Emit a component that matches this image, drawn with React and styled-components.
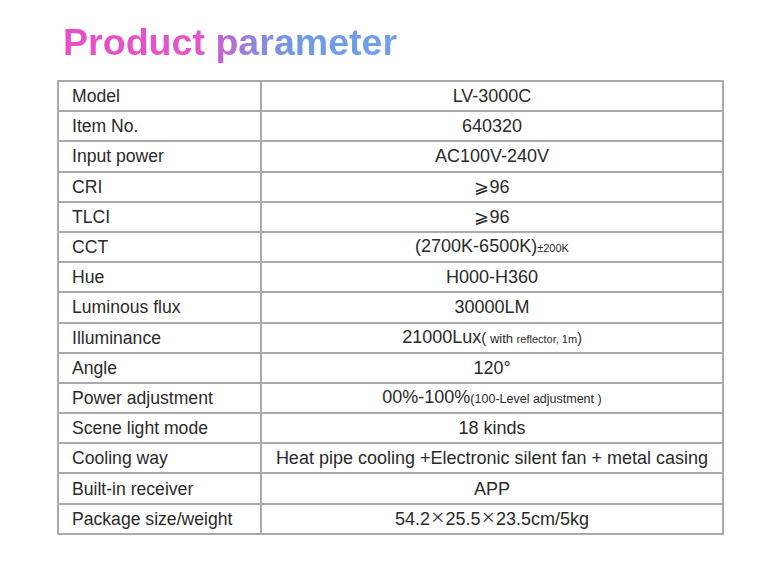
import React from "react";
import styled, { createGlobalStyle } from "styled-components";

const GlobalStyle = createGlobalStyle`
  html, body {
    margin: 0;
    padding: 0;
    background: #ffffff;
  }
  body {
    font-family: "Liberation Sans", Arial, sans-serif;
    color: #222;
  }
`;

const Page = styled.div`
  width: 762px;
  height: 585px;
  padding: 21px 0 0 0;
  box-sizing: border-box;
  background: #fff;
`;

const Title = styled.h1`
  margin: 0 0 17px 63px;
  font-family: "Liberation Sans", Arial, sans-serif;
  font-weight: 700;
  font-size: 37.6px;
  line-height: 42px;
  display: inline-block;
  background: linear-gradient(
    90deg,
    #e84ec6 0%,
    #e653c9 40%,
    #c066d3 48%,
    #8a88dd 58%,
    #6f9ae6 70%,
    #72a0e8 100%
  );
  -webkit-background-clip: text;
  background-clip: text;
  color: transparent;
`;

const Table = styled.table`
  margin-left: 57px;
  width: 667px;
  border-collapse: collapse;
  border: 2px solid #aaa;
  table-layout: fixed;
`;

const Row = styled.tr`
  height: 30.2px;
`;

const Cell = styled.td`
  border: 2px solid #aaa;
  padding: 0;
  color: #2a2a2a;
  vertical-align: middle;
  white-space: nowrap;
  line-height: 20px;
`;

const Label = styled(Cell)`
  width: 188px;
  padding-left: 13px;
  font-size: 17.6px;
  text-align: left;
`;

const Value = styled(Cell)`
  font-size: 18px;
  text-align: center;
`;

const Small = styled.span`
  font-size: ${(p) => p.$size}px;
`;

const Times = styled.span`
  font-family: "Liberation Serif", serif;
  font-size: 24px;
  line-height: 10px;
  padding: 0 1px;
`;

const rows = [
  { label: "Model", value: "LV-3000C" },
  { label: "Item No.", value: "640320" },
  { label: "Input power", value: "AC100V-240V" },
  { label: "CRI", value: "⩾96" },
  { label: "TLCI", value: "⩾96" },
  {
    label: "CCT",
    value: (
      <>
        (2700K-6500K)<Small $size={11}>±200K</Small>
      </>
    ),
  },
  { label: "Hue", value: "H000-H360" },
  { label: "Luminous flux", value: "30000LM" },
  {
    label: "Illuminance",
    value: (
      <>
        21000Lux<Small $size={15}>(</Small>
        <Small $size={13}> with </Small>
        <Small $size={11}>reflector, 1m</Small>
        <Small $size={14}>)</Small>
      </>
    ),
  },
  { label: "Angle", value: "120°" },
  {
    label: "Power adjustment",
    value: (
      <>
        00%-100%<Small $size={12.5}>(100-Level adjustment )</Small>
      </>
    ),
  },
  { label: "Scene light mode", value: "18 kinds" },
  {
    label: "Cooling way",
    value: "Heat pipe cooling +Electronic silent fan + metal casing",
  },
  { label: "Built-in receiver", value: "APP" },
  {
    label: "Package size/weight",
    value: (
      <>
        54.2<Times>×</Times>25.5<Times>×</Times>23.5cm/5kg
      </>
    ),
  },
];

export default function App() {
  return (
    <Page>
      <GlobalStyle />
      <Title>Product parameter</Title>
      <Table>
        <tbody>
          {rows.map((r) => (
            <Row key={r.label}>
              <Label>{r.label}</Label>
              <Value>{r.value}</Value>
            </Row>
          ))}
        </tbody>
      </Table>
    </Page>
  );
}
